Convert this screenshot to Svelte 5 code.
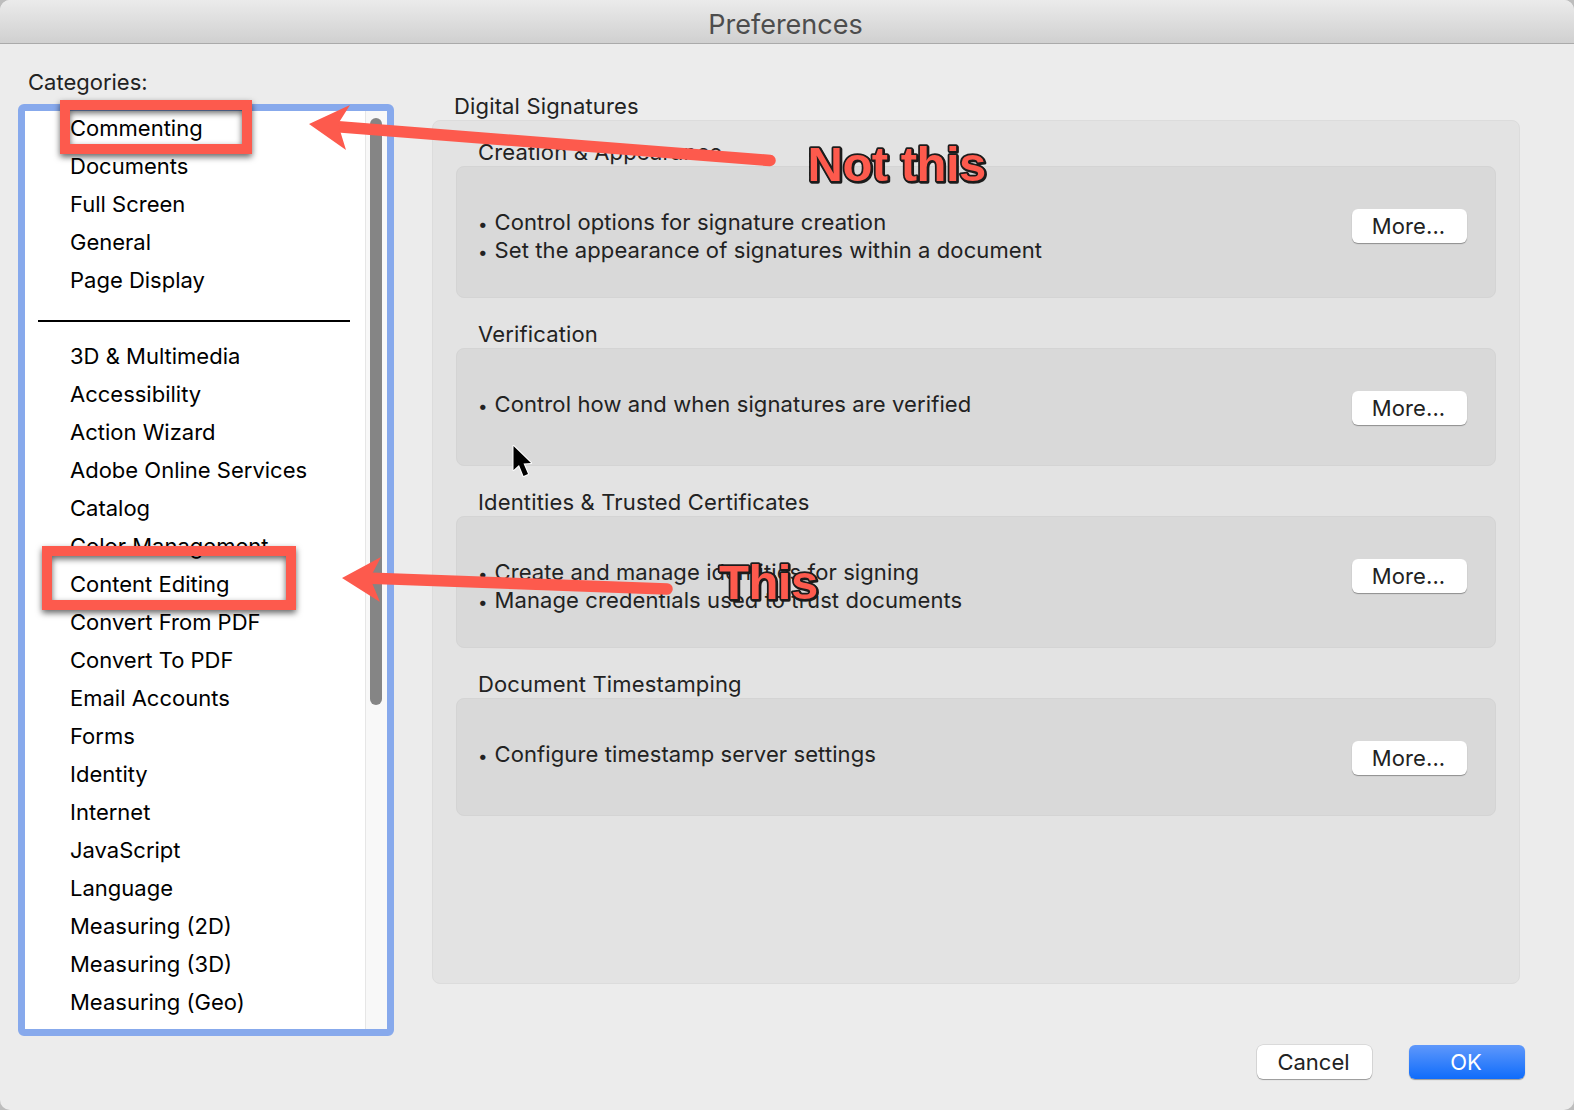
<script>
  const top = ['Commenting', 'Documents', 'Full Screen', 'General', 'Page Display'];
  const rest = ['3D & Multimedia', 'Accessibility', 'Action Wizard', 'Adobe Online Services', 'Catalog', 'Color Management', 'Content Editing', 'Convert From PDF', 'Convert To PDF', 'Email Accounts', 'Forms', 'Identity', 'Internet', 'JavaScript', 'Language', 'Measuring (2D)', 'Measuring (3D)', 'Measuring (Geo)'];
  const sections = [
    { title: 'Creation & Appearance', lines: ['Control options for signature creation', 'Set the appearance of signatures within a document'] },
    { title: 'Verification', lines: ['Control how and when signatures are verified'] },
    { title: 'Identities & Trusted Certificates', lines: ['Create and manage identities for signing', 'Manage credentials used to trust documents'] },
    { title: 'Document Timestamping', lines: ['Configure timestamp server settings'] }
  ];
</script>

<div class="screen">
  <div class="window">
    <header class="titlebar">Preferences</header>
    <main class="main">
      <section class="left">
        <div class="label cats">Categories:</div>
        <div class="listbox">
          <div class="listscroll">
            {#each top as item}<div class="row">{item}</div>{/each}
            <div class="divider"></div>
            {#each rest as item}<div class="row">{item}</div>{/each}
          </div>
          <div class="track"><div class="thumb"></div></div>
        </div>
      </section>
      <section class="right">
        <div class="label grouptitle">Digital Signatures</div>
        <div class="panel">
          {#each sections as s}
            <div class="label sectitle">{s.title}</div>
            <div class="box" class:tall={s.lines.length > 1}>
              <div class="lines">
                {#each s.lines as l}<div class="line"><span class="bullet">•</span>{l}</div>{/each}
              </div>
              <button class="btn more">More...</button>
            </div>
          {/each}
        </div>
      </section>
    </main>
    <footer class="footer">
      <button class="btn cancel">Cancel</button>
      <button class="btn ok">OK</button>
    </footer>
  </div>

  <svg class="overlay" width="1574" height="1110" viewBox="0 0 1574 1110">
    <rect class="redbox" x="65" y="105" width="182" height="44" />
    <rect class="redbox" x="47" y="551" width="244" height="54" />
    <path class="shaft" d="M335 126.500 L770 160.500" />
    <path class="head" d="M309 124 L350 105 L338 124 L346 150 Z" />
    <path class="shaft" d="M365 578 L667 589" />
    <path class="head" d="M342 578 L381 557 L370 578 L380 602 Z" />
    <text class="note" x="807.500" y="181">Not this</text>
    <text class="note" x="719" y="599">This</text>
    <path class="cursor" d="M513.500 446 L513.500 470 L519 465 L523.500 476 L528 474 L523.500 463.500 L531 463 Z" />
  </svg>
</div>

<style>
  :global(body) { margin: 0; background: #bdbdbd; }
  .screen { position: relative; width: 1574px; height: 1110px; overflow: hidden; }
  .window {
    width: 1574px; height: 1110px; background: #ececec; border-radius: 10px; overflow: hidden;
    font-family: Inter, "Liberation Sans", sans-serif; font-size: 22px; color: #222;
    display: flex; flex-direction: column;
  }
  .titlebar {
    height: 37px; padding: 6px 3px 0 0; border-bottom: 1px solid #aaa;
    background: linear-gradient(#ebebeb, #d0d0d0);
    display: flex; align-items: center; justify-content: center;
    font-size: 27px; color: #4d4d4d;
  }
  .main { display: flex; padding: 26px 0 0 18px; }
  .label { height: 24px; line-height: 24px; white-space: nowrap; }
  .left { width: 376px; }
  .cats { padding-left: 10px; margin-bottom: 10px; }
  .listbox {
    box-sizing: border-box; height: 932px; border: 7px solid #87a9ec; border-radius: 6px;
    background: #fff; display: flex; overflow: hidden; color: #000;
  }
  .listscroll { flex: 1; margin-top: -2px; min-width: 0; }
  .row { height: 38px; line-height: 38px; padding-left: 45px; white-space: nowrap; }
  .divider { height: 2px; background: #000; margin: 21px 0 15px 13px; width: 312px; }
  .track { width: 22px; background: #f8f8f8; border-left: 1px solid #e6e6e6; box-sizing: border-box; padding: 7px 0 0 4px; }
  .thumb { width: 12px; height: 587px; background: #858585; border-radius: 6px; }
  .right { margin-left: 38px; width: 1088px; padding-top: 24px; letter-spacing: .15px; }
  .grouptitle { padding-left: 22px; margin-bottom: 2px; }
  .panel {
    box-sizing: border-box; height: 864px; background: #e3e3e3; border: 1px solid #dcdcdc; border-radius: 8px;
    padding: 19px 23px 0;
  }
  .sectitle { padding-left: 22px; margin-bottom: 2px; }
  .box {
    box-sizing: border-box; height: 118px; margin-bottom: 24px; background: #d9d9d9; border: 1px solid #d4d4d4; border-radius: 8px;
    padding: 41px 28px 0 21px; display: flex; justify-content: space-between; align-items: flex-start;
  }
  .box.tall { height: 132px; }
  .line { height: 28px; line-height: 28px; white-space: nowrap; letter-spacing: .1px; }
  .bullet { display: inline-block; width: 16.5px; font-size: 17px; letter-spacing: 0; }
  .btn {
    font: inherit; letter-spacing: 0; border: 0; padding: 0 2px 0 0; width: 115px; height: 34px; border-radius: 6px; background: #fff; color: #222;
    box-shadow: 0 1px 1px rgba(0,0,0,.35); line-height: 34px; display: block;
  }
  .more { margin-top: 1px; letter-spacing: .1px; }
  .footer { display: flex; justify-content: flex-end; gap: 37px; padding: 9px 49px 0 0; }
  .cancel { box-shadow: 0 1px 1px rgba(0,0,0,.3), 0 0 0 .5px rgba(0,0,0,.15); }
  .ok { width: 116px; background: linear-gradient(#5f98fb, #0f6cfb); color: #fff; }
  .overlay { position: absolute; left: 0; top: 0; pointer-events: none; }
  .redbox { fill: none; stroke: #fd5a4d; stroke-width: 10; filter: drop-shadow(0 3px 3px rgba(0,0,0,.6)); }
  .shaft { fill: none; stroke: #fd5a4d; stroke-width: 11.5; stroke-linecap: round; }
  .head { fill: #fd5a4d; }
  .note {
    font-family: "Liberation Sans", Arial, sans-serif; font-weight: 700; font-size: 49px; letter-spacing: -.5px;
    fill: #fd5a4d; stroke: #1c1c1c; stroke-width: 3.5px; paint-order: stroke fill; stroke-linejoin: round;
    filter: drop-shadow(1px 1px 0 #1c1c1c);
  }
  .cursor { fill: #000; stroke: #fff; stroke-width: 2px; stroke-linejoin: round; paint-order: stroke fill; }
</style>
